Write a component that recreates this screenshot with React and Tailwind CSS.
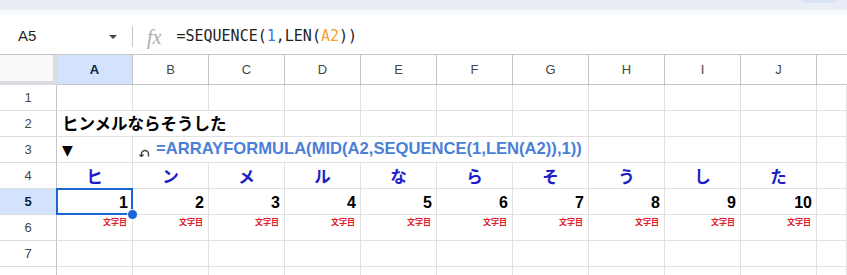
import React from 'react';

const cols = ['A', 'B', 'C', 'D', 'E', 'F', 'G', 'H', 'I', 'J'];
const chars = ['ヒ', 'ン', 'メ', 'ル', 'な', 'ら', 'そ', 'う', 'し', 'た'];

const cell = 'border-r border-b border-[#e1e1e1] min-w-0';
const jp = "font-['Liberation_Sans','Noto_Sans_CJK_JP',sans-serif]";

function RowHead({ n, active }) {
  return (
    <div
      className={`flex items-center justify-center border-r border-b border-r-[#c4c7c5] border-b-[#dadce0] text-[13px] ${
        active ? 'bg-[#d3e3fd] text-[#0b1f3f] font-bold' : 'text-[#444746]'
      }`}
    >
      {n}
    </div>
  );
}

function Empty({ count = 1 }) {
  return Array.from({ length: count }).map((_, i) => <div key={i} className={cell} />);
}

export default function App() {
  return (
    <div className={`w-[847px] h-[275px] overflow-hidden bg-white ${jp}`}>
      {/* toolbar edge */}
      <div className="relative h-[9px] bg-[#e9eef6]">
        <div className="absolute right-[10px] top-0 w-[36px] h-[3px] rounded-b-full bg-[#dae4f6]" />
      </div>
      <div className="h-[8px] bg-linear-to-b from-[#f0f4fa] to-white" />

      {/* formula bar */}
      <div className="flex items-center h-[37px] pt-[2px]">
        <div className="w-[132px] flex items-center justify-between pl-[18px] pr-[15px]">
          <span className="text-[15px] text-[#1f1f1f]">A5</span>
          <svg width="8" height="4" viewBox="0 0 8 4">
            <path d="M0 0h8L4 4z" fill="#444746" />
          </svg>
        </div>
        <div className="w-px h-[21px] bg-[#c4c7c5]" />
        <span className="ml-[14px] italic font-['Liberation_Serif',serif] text-[20px] leading-none text-[#a8acb0]">
          fx
        </span>
        <span className="ml-[15px] font-['DejaVu_Sans_Mono',monospace] text-[15px] text-[#1f1f1f]">
          =SEQUENCE(<span className="text-[#3b78d8]">1</span>,LEN(
          <span className="text-[#f0a236]">A2</span>))
        </span>
      </div>

      {/* grid */}
      <div className="grid grid-cols-[57px_repeat(10,76px)_1fr] grid-rows-[30px_repeat(8,26px)] border-t border-[#c4c7c5]">
        {/* header row */}
        <div className="bg-[#f8f9fa] border-r-4 border-b-4 border-[#dadce0]" />
        {cols.map((c) => (
          <div
            key={c}
            className={`flex items-center justify-center border-r border-b border-[#c4c7c5] text-[13px] ${
              c === 'A' ? 'bg-[#d3e3fd] text-[#0b1f3f] font-bold' : 'text-[#444746]'
            }`}
          >
            {c}
          </div>
        ))}
        <div className="border-b border-[#c4c7c5]" />

        {/* row 1 */}
        <RowHead n={1} />
        <Empty count={11} />

        {/* row 2 */}
        <RowHead n={2} />
        <div className={`${cell} col-span-3 flex items-end pl-[5px] pb-[2px] text-[16.5px] font-bold leading-[20px] text-black whitespace-nowrap`}>
          ヒンメルならそうした
        </div>
        <Empty count={8} />

        {/* row 3 */}
        <RowHead n={3} />
        <div className={`${cell} flex items-end pl-[5px] pb-[3px] text-[14px] leading-[18px] font-['DejaVu_Sans',sans-serif]`}>
          ▼
        </div>
        <div className={`${cell} col-span-6 flex items-end pl-[6px] pb-[3px] whitespace-nowrap`}>
          <svg width="11" height="9" viewBox="0 0 11 9" className="mb-[2px] mr-[6px]">
            <path d="M2.5 8.5V6a3.5 3.5 0 0 1 7 0v2.5" fill="none" stroke="#3c4043" strokeWidth="1.4" />
            <path d="M0.5 6.5l2 2.2 2-2.2" fill="none" stroke="#3c4043" strokeWidth="1.2" />
          </svg>
          <span className="text-[16.6px] leading-[20px] font-bold text-[#4a80d6]">
            =ARRAYFORMULA(MID(A2,SEQUENCE(1,LEN(A2)),1))
          </span>
        </div>
        <Empty count={4} />

        {/* row 4 */}
        <RowHead n={4} />
        {chars.map((ch) => (
          <div key={ch} className={`${cell} flex items-end justify-center pb-[1px] text-[16.5px] leading-[20px] font-bold text-[#1c1cc8]`}>
            {ch}
          </div>
        ))}
        <Empty />

        {/* row 5 */}
        <RowHead n={5} active />
        {cols.map((c, i) => (
          <div key={c} className={`${cell} relative flex items-end justify-end pr-[4px] pb-[2px] text-[16px] leading-[18px] font-bold text-black`}>
            {i + 1}
            {i === 0 && (
              <>
                <div className="absolute -left-px -top-px -right-px -bottom-px border-2 border-[#1a66d2] pointer-events-none z-10" />
                <div className="absolute -right-[6px] -bottom-[6px] w-[11px] h-[11px] rounded-full bg-[#1a66d2] border border-white z-20" />
              </>
            )}
          </div>
        ))}
        <Empty />

        {/* row 6 */}
        <RowHead n={6} />
        {cols.map((c) => (
          <div key={c} className={`${cell} flex items-start justify-end pr-[5px] pt-[3px] text-[8px] leading-[10px] font-bold text-[#e0202a]`}>
            文字目
          </div>
        ))}
        <Empty />

        {/* rows 7-8 */}
        <RowHead n={7} />
        <Empty count={11} />
        <RowHead n={8} />
        <Empty count={11} />
      </div>
    </div>
  );
}
